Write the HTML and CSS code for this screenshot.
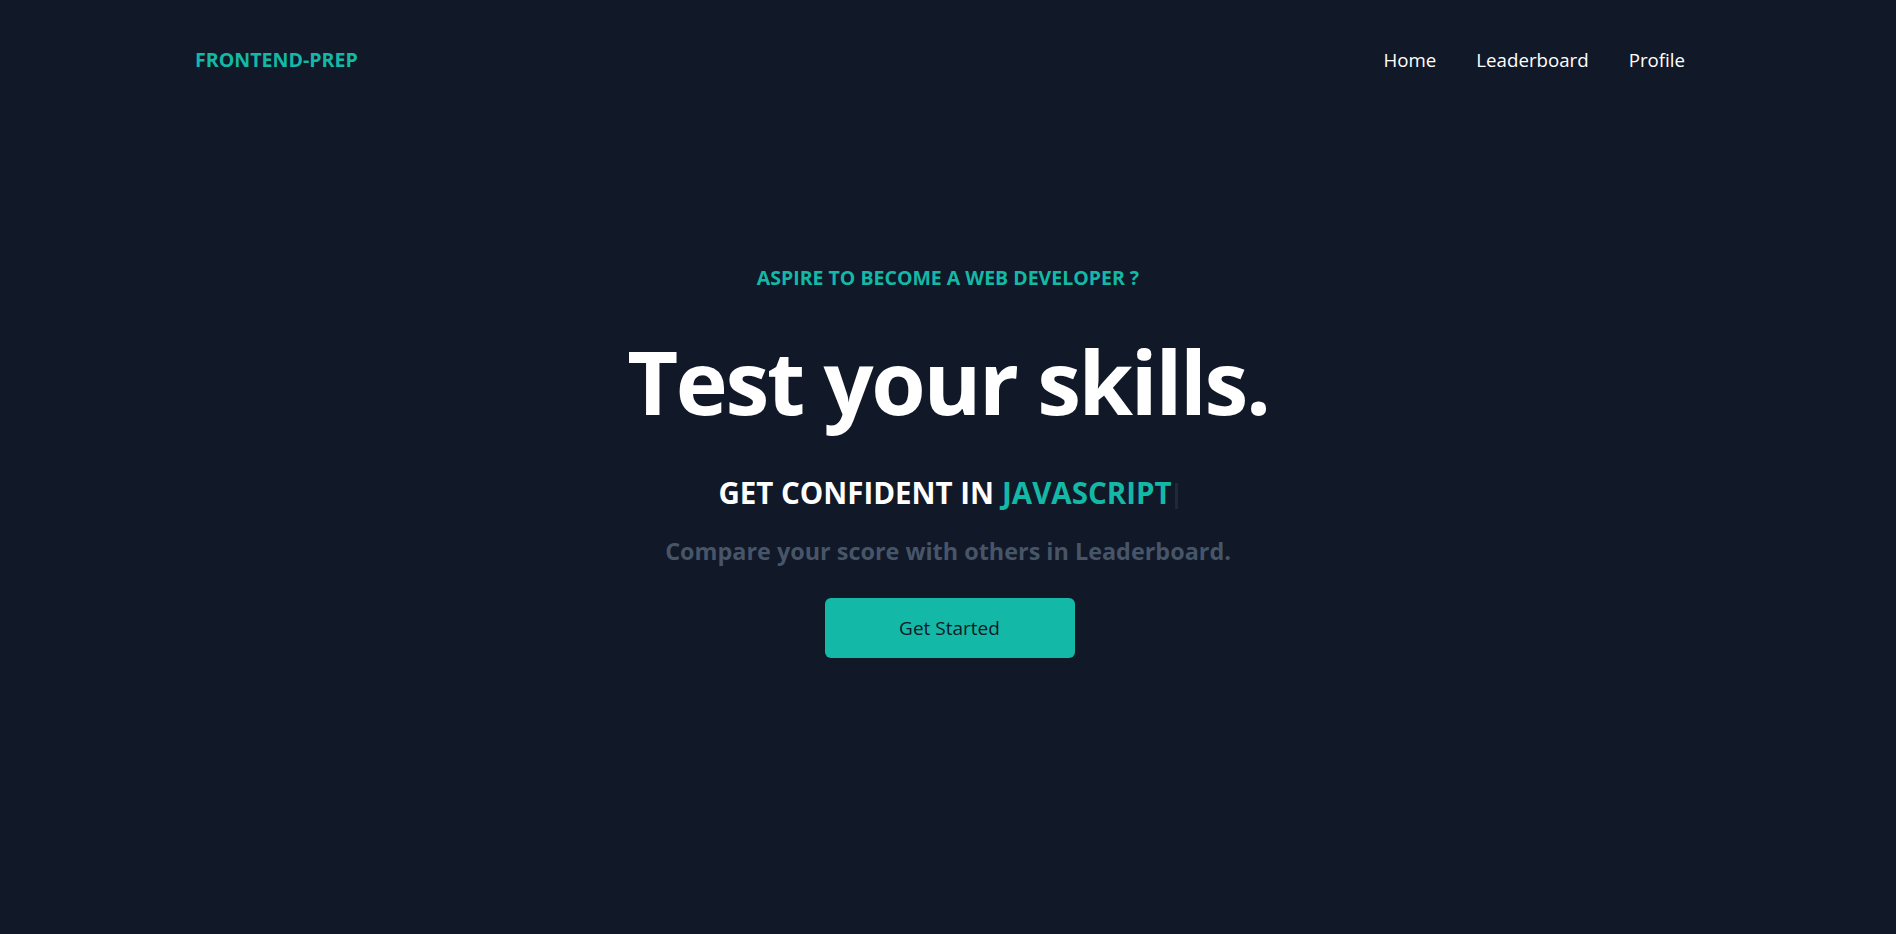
FILE: index.html
```html
<!DOCTYPE html>
<html lang="en">
<head>
<meta charset="utf-8">
<title>Frontend Prep</title>
<link rel="stylesheet" href="styles.css">
</head>
<body>
<header class="header">
  <a class="logo" href="#">FRONTEND-PREP</a>
  <nav class="nav">
    <a href="#">Home</a>
    <a href="#">Leaderboard</a>
    <a href="#">Profile</a>
  </nav>
</header>
<main class="hero">
  <p class="eyebrow">ASPIRE TO BECOME A WEB DEVELOPER ?</p>
  <h1 class="title">Test your skills.</h1>
  <p class="typed">GET CONFIDENT IN <span class="accent">JAVASCRIPT</span><span class="cursor"></span></p>
  <p class="sub">Compare your score with others in Leaderboard.</p>
  <button class="cta">Get Started</button>
</main>
</body>
</html>
```
FILE: styles.css
```css
* { box-sizing: border-box; }
html, body { margin: 0; padding: 0; }
body {
  background: #111827;
  color: #ffffff;
  font-family: "Open Sans", "Noto Sans", sans-serif;
  height: 934px;
  overflow: hidden;
}
a { text-decoration: none; color: inherit; }
.header {
  display: flex;
  justify-content: space-between;
  align-items: center;
  padding: 44px 211px 0 195px;
  height: 74px;
}
.logo {
  color: #14b8a6;
  font-weight: 700;
  font-size: 19.6px;
}
.nav {
  display: flex;
  gap: 40px;
  font-size: 18.7px;
}
.hero {
  display: flex;
  flex-direction: column;
  align-items: center;
  padding-top: 190px;
}
.eyebrow {
  margin: 0;
  color: #14b8a6;
  font-weight: 700;
  font-size: 19.5px;
  line-height: 28px;
}
.title {
  margin: 41px 0 0;
  font-size: 88px;
  line-height: 96px;
  font-weight: 700;
  letter-spacing: -2.3px;
}
.typed {
  margin: 46px 0 0;
  font-size: 29.5px;
  line-height: 36px;
  font-weight: 700;
  display: flex;
  align-items: center;
}
.accent { color: #14b8a6; margin-left: 8px; }
.cursor {
  display: inline-block;
  width: 3px;
  height: 26px;
  background: #1e293b;
  margin: 5px 0 0 3px;
}
.sub {
  margin: 24px 0 0;
  color: #475569;
  font-size: 23.4px;
  line-height: 32px;
  font-weight: 700;
}
.cta {
  margin: 31px 0 0 3px;
  width: 250px;
  height: 60px;
  border: none;
  border-radius: 6px;
  background: #14b8a6;
  color: #111827;
  font-family: inherit;
  font-size: 19px;
}
```
